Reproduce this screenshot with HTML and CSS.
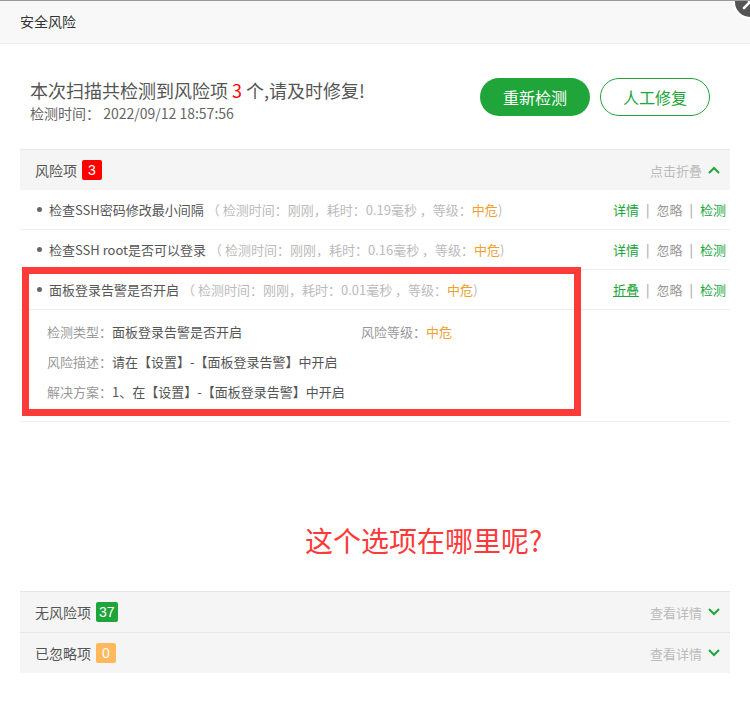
FILE: index.html
```html
<!DOCTYPE html>
<html lang="zh-CN">
<head>
<meta charset="utf-8">
<title>安全风险</title>
<link rel="stylesheet" href="styles.css">
</head>
<body>
<div class="modal">
  <div class="title-bar">安全风险</div>
  <span class="close-btn"><svg width="30" height="30" viewBox="0 0 30 30"><path d="M9 9 L21 21 M21 9 L9 21" stroke="#fff" stroke-width="2.5" stroke-linecap="round"/></svg></span>

  <div class="summary">
    <div class="summary-text">
      <div class="summary-main">本次扫描共检测到风险项 <span class="red">3</span> 个,请及时修复!</div>
      <div class="summary-time">检测时间：&nbsp;2022/09/12 18:57:56</div>
    </div>
    <div class="summary-actions">
      <span class="btn btn-primary">重新检测</span>
      <span class="btn btn-outline">人工修复</span>
    </div>
  </div>

  <div class="panel">
    <div class="group-head">
      <div class="group-title">风险项<span class="badge badge-red">3</span></div>
      <div class="group-toggle">点击折叠
        <svg class="chev" width="12" height="8" viewBox="0 0 12 8"><polyline points="1,7 6,2 11,7" fill="none" stroke="#20a53a" stroke-width="2"/></svg>
      </div>
    </div>

    <div class="row">
      <div class="row-main"><span class="dot"></span><span class="row-name">检查SSH密码修改最小间隔</span><span class="row-meta">（ 检测时间：刚刚，耗时：0.19毫秒 ，等级：<span class="orange">中危</span>)</span></div>
      <div class="row-links"><span class="lnk">详情</span><span class="sep">|</span><span class="lnk-gray">忽略</span><span class="sep">|</span><span class="lnk">检测</span></div>
    </div>
    <div class="row">
      <div class="row-main"><span class="dot"></span><span class="row-name">检查SSH root是否可以登录</span><span class="row-meta">（ 检测时间：刚刚，耗时：0.16毫秒 ，等级：<span class="orange">中危</span>)</span></div>
      <div class="row-links"><span class="lnk">详情</span><span class="sep">|</span><span class="lnk-gray">忽略</span><span class="sep">|</span><span class="lnk">检测</span></div>
    </div>
    <div class="row">
      <div class="row-main"><span class="dot"></span><span class="row-name">面板登录告警是否开启</span><span class="row-meta">（ 检测时间：刚刚，耗时：0.01毫秒 ，等级：<span class="orange">中危</span>)</span></div>
      <div class="row-links"><span class="lnk lnk-u">折叠</span><span class="sep">|</span><span class="lnk-gray">忽略</span><span class="sep">|</span><span class="lnk">检测</span></div>
    </div>
    <div class="detail">
      <div class="detail-cell"><span class="lbl">检测类型：</span>面板登录告警是否开启</div>
      <div class="detail-cell"><span class="lbl">风险等级：</span><span class="orange">中危</span></div>
      <div class="detail-cell full"><span class="lbl">风险描述：</span>请在【设置】-【面板登录告警】中开启</div>
      <div class="detail-cell full"><span class="lbl">解决方案：</span>1、在【设置】-【面板登录告警】中开启</div>
    </div>

    <div class="bottom-groups">
      <div class="group-head">
        <div class="group-title">无风险项<span class="badge badge-green">37</span></div>
        <div class="group-toggle">查看详情
          <svg class="chev" width="12" height="8" viewBox="0 0 12 8"><polyline points="1,1 6,6 11,1" fill="none" stroke="#20a53a" stroke-width="2"/></svg>
        </div>
      </div>
      <div class="group-head">
        <div class="group-title">已忽略项<span class="badge badge-orange">0</span></div>
        <div class="group-toggle">查看详情
          <svg class="chev" width="12" height="8" viewBox="0 0 12 8"><polyline points="1,1 6,6 11,1" fill="none" stroke="#20a53a" stroke-width="2"/></svg>
        </div>
      </div>
    </div>
  </div>

  <div class="annot-box"></div>
  <div class="annot-text">这个选项在哪里呢?</div>
</div>
</body>
</html>
```

FILE: styles.css
```css
html, body {
  margin: 0;
  padding: 0;
  background: #fff;
}
body {
  font-family: "Noto Sans CJK SC", "Microsoft YaHei", sans-serif;
  color: #555;
}
.modal {
  position: relative;
  width: 750px;
  height: 701px;
  overflow: hidden;
  background: #fff;
  border-top: 1px solid #9a9a9a;
  box-sizing: border-box;
}
.title-bar {
  height: 42px;
  line-height: 40px;
  padding-left: 20px;
  background: #f8f8f8;
  border-bottom: 1px solid #eee;
  font-size: 14px;
  color: #333;
}
.close-btn {
  position: absolute;
  top: -16px;
  right: -17px;
  width: 30px;
  height: 30px;
  border-radius: 50%;
  background: #555;
  border: 2px solid #fff;
}
.close-btn svg { display: block; }
.summary {
  display: flex;
  justify-content: space-between;
  align-items: flex-start;
  padding: 34px 40px 0 30px;
  height: 71px;
}
.summary-main {
  font-size: 18px;
  line-height: 24px;
  color: #555;
}
.red { color: #f00; }
.orange { color: #f0a030; }
.summary-time {
  font-size: 14px;
  line-height: 22px;
  color: #666;
}
.summary-actions {
  display: flex;
  gap: 10px;
}
.btn {
  display: flex;
  align-items: center;
  justify-content: center;
  width: 110px;
  height: 38px;
  box-sizing: border-box;
  border-radius: 20px;
  font-size: 16px;
}
.btn-primary {
  background: #20a53a;
  color: #fff;
}
.btn-outline {
  border: 1px solid #20a53a;
  color: #20a53a;
  background: #fff;
}
.panel {
  margin: 0 20px;
}
.group-head {
  display: flex;
  justify-content: space-between;
  align-items: center;
  height: 41px;
  box-sizing: border-box;
  background: #f5f5f5;
  border-top: 1px solid #e6e6e6;
  padding: 0 10px 0 15px;
}
.group-title {
  display: flex;
  align-items: center;
  font-size: 14px;
  color: #555;
}
.badge {
  display: inline-flex;
  align-items: center;
  justify-content: center;
  min-width: 20px;
  height: 20px;
  padding: 0 3px;
  box-sizing: border-box;
  margin-left: 5px;
  border-radius: 2px;
  font-size: 14px;
  color: #fff;
  font-family: "Liberation Sans", "Noto Sans CJK SC", sans-serif;
}
.badge-red { background: #f00; }
.badge-green { background: #20a53a; }
.badge-orange { background: #ffb95c; }
.group-toggle {
  display: flex;
  align-items: center;
  gap: 6px;
  font-size: 13px;
  color: #bbb;
}
.chev { display: block; }
.row {
  display: flex;
  justify-content: space-between;
  align-items: center;
  height: 40px;
  box-sizing: border-box;
  border-bottom: 1px solid #eee;
  padding: 0 4px 0 17px;
  font-size: 13px;
}
.row-main {
  display: flex;
  align-items: center;
  white-space: pre;
}
.dot {
  width: 5px;
  height: 5px;
  border-radius: 50%;
  background: #666;
  margin-right: 7px;
}
.row-name { color: #555; }
.row-meta {
  color: #bbb;
  margin-left: 3px;
}
.row-links {
  display: flex;
  align-items: center;
  white-space: nowrap;
}
.lnk { color: #20a53a; }
.lnk-u { text-decoration: underline; }
.lnk-gray { color: #999; }
.sep {
  color: #999;
  margin: 0 7px;
}
.detail {
  display: grid;
  grid-template-columns: 314px auto;
  padding: 7px 0 14px 27px;
  border-bottom: 1px solid #eee;
  font-size: 13px;
  line-height: 30px;
  color: #555;
}
.detail-cell.full { grid-column: 1 / 3; }
.lbl { color: #999; }
.bottom-groups {
  margin-top: 169px;
}
.annot-box {
  position: absolute;
  left: 22px;
  top: 266px;
  width: 559px;
  height: 149px;
  border: 7px solid #fd3a3a;
  box-sizing: border-box;
}
.annot-text {
  position: absolute;
  left: 305px;
  top: 519px;
  font-size: 28px;
  line-height: 40px;
  color: #fd3a3a;
  white-space: nowrap;
}
```
